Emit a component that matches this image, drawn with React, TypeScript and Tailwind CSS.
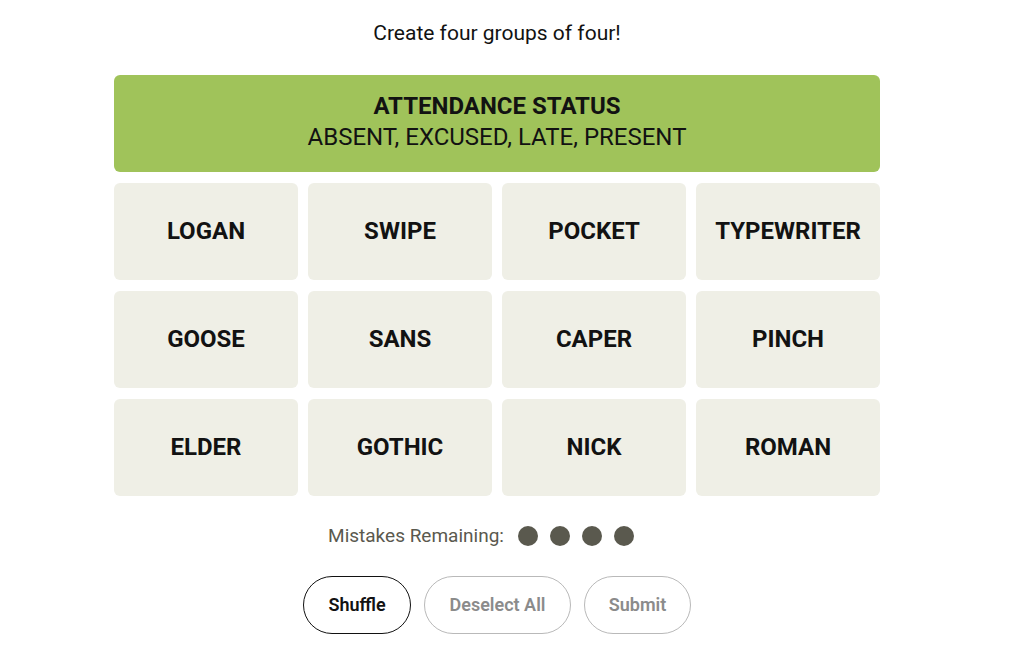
import React from 'react';

const words = [
  'LOGAN', 'SWIPE', 'POCKET', 'TYPEWRITER',
  'GOOSE', 'SANS', 'CAPER', 'PINCH',
  'ELDER', 'GOTHIC', 'NICK', 'ROMAN',
];

const font = { fontFamily: 'Roboto, "Liberation Sans", Arial, sans-serif' };

const App = () => {
  return (
    <div className="w-[994px] h-[666px] bg-white flex flex-col items-center" style={font}>
      <p className="mt-[20px] text-[21px] leading-[26px] text-[#121212]">Create four groups of four!</p>

      <div className="mt-[29px] w-[766px] flex flex-col gap-[11px]">
        <div className="h-[97px] pb-[3px] rounded-[6px] bg-[#a0c35a] flex flex-col items-center justify-center text-[#121212]">
          <span className="text-[24px] leading-[31px] font-bold">ATTENDANCE STATUS</span>
          <span className="text-[24px] leading-[31px]">ABSENT, EXCUSED, LATE, PRESENT</span>
        </div>
        <div className="grid grid-cols-4 gap-x-[10px] gap-y-[11px]">
          {words.map((w) => (
            <div
              key={w}
              className="h-[97px] pb-[2px] rounded-[6px] bg-[#efefe6] flex items-center justify-center text-[24px] font-bold text-[#121212]"
            >
              {w}
            </div>
          ))}
        </div>
      </div>

      <div className="mt-[26px] mr-[32px] flex items-center gap-[14px] text-[#5a594e]">
        <span className="text-[19px]">Mistakes Remaining:</span>
        <div className="flex gap-[12px]">
          <span className="w-[20px] h-[20px] rounded-full bg-[#5a594e]" />
          <span className="w-[20px] h-[20px] rounded-full bg-[#5a594e]" />
          <span className="w-[20px] h-[20px] rounded-full bg-[#5a594e]" />
          <span className="w-[20px] h-[20px] rounded-full bg-[#5a594e]" />
        </div>
      </div>

      <div className="mt-[25px] flex gap-[13px]">
        <button className="w-[108px] h-[58px] rounded-full border border-[#121212] text-[18px] font-semibold text-[#121212] bg-white">
          Shuffle
        </button>
        <button className="w-[147px] h-[58px] rounded-full border border-[#b9b9b9] text-[18px] font-semibold text-[#8b8b8b] bg-white">
          Deselect All
        </button>
        <button className="w-[107px] h-[58px] rounded-full border border-[#b9b9b9] text-[18px] font-semibold text-[#8b8b8b] bg-white">
          Submit
        </button>
      </div>
    </div>
  );
};

export default App;
